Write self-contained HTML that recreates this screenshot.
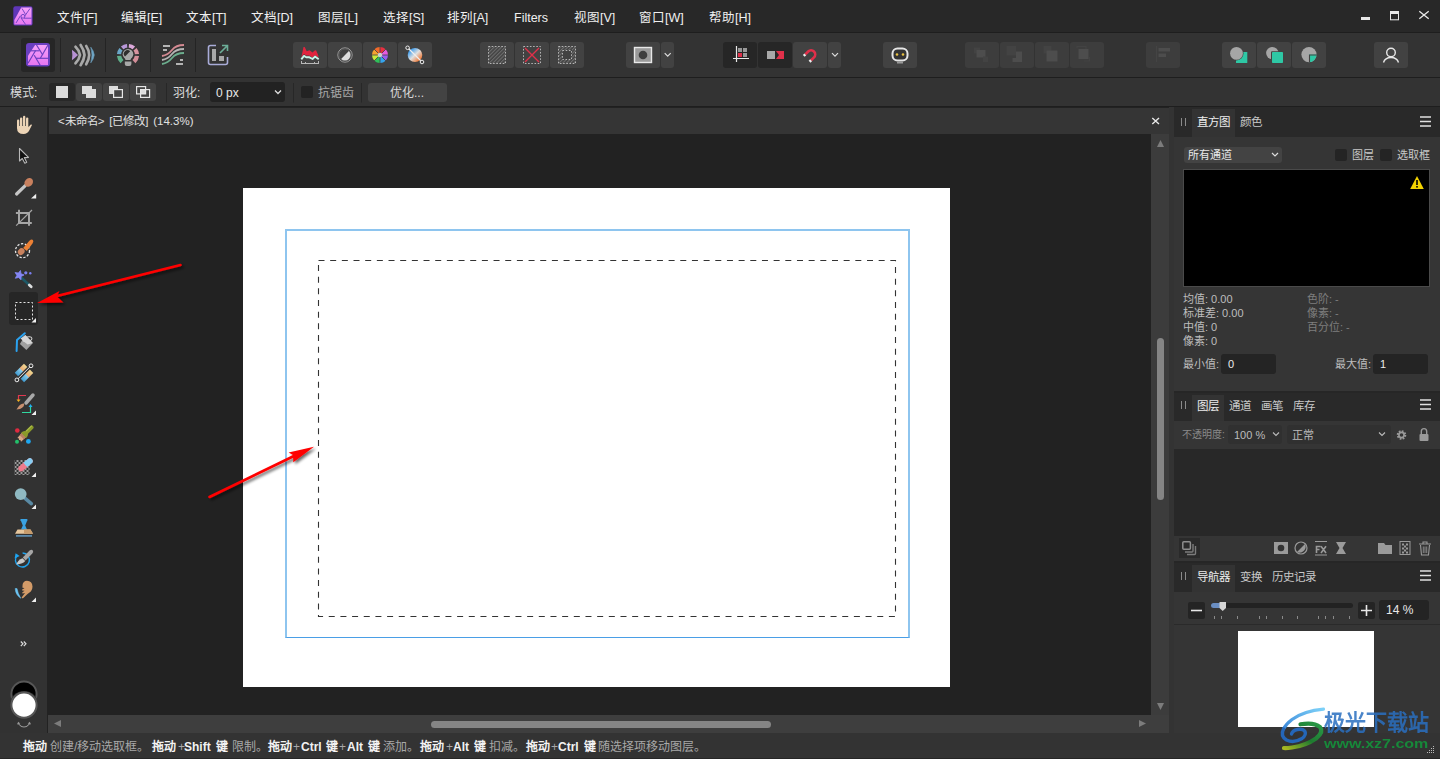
<!DOCTYPE html>
<html lang="zh-CN"><head><meta charset="utf-8">
<style>
*{margin:0;padding:0;box-sizing:border-box}
html,body{width:1440px;height:759px;overflow:hidden;background:#222;font-family:"Liberation Sans",sans-serif;color:#e6e6e6;font-size:12px}
.a{position:absolute}
svg.a{overflow:visible}
#menubar{left:0;top:0;width:1440px;height:32px;background:#282828}
#sep1{left:0;top:32px;width:1440px;height:1px;background:#1e1e1e}
#toolbar{left:0;top:33px;width:1440px;height:44px;background:#333}
#sep2{left:0;top:77px;width:1440px;height:1px;background:#1e1e1e}
#ctx{left:0;top:78px;width:1440px;height:28px;background:#333}
#sep3{left:0;top:106px;width:1440px;height:1px;background:#1e1e1e}
#lefttools{left:0;top:107px;width:47px;height:626px;background:#323232}
#tab{left:49px;top:108px;width:1121px;height:26px;background:#353535}
#canvas{left:49px;top:134px;width:1102px;height:581px;background:#222}
#vscroll{left:1151px;top:134px;width:18px;height:581px;background:#3c3c3c}
#hscroll{left:48px;top:715px;width:1121px;height:18px;background:#3e3e3e}
#status{left:0;top:733px;width:1440px;height:26px;background:#333}
#rpanel{left:1173px;top:107px;width:267px;height:626px;background:#333}
.menu{top:10px;font-size:12.5px;line-height:16px;color:#f0f0f0;white-space:nowrap}
.tb{top:42px;width:34px;height:26px;background:#424242;border-radius:3px}
.tbd{top:42px;width:34px;height:26px;background:#262626;border-radius:3px}
.vsep{width:1px;background:#242424}
.t{white-space:nowrap;line-height:14px}
</style></head><body>
<div id="menubar" class="a"></div>
<div id="sep1" class="a"></div>
<div id="toolbar" class="a"></div>
<div id="sep2" class="a"></div>
<div id="ctx" class="a"></div>
<div id="sep3" class="a"></div>
<div id="lefttools" class="a"></div>
<div id="tab" class="a"></div>
<div id="canvas" class="a"></div>
<div id="vscroll" class="a"></div>
<div id="hscroll" class="a"></div>
<div id="status" class="a"></div>
<div id="rpanel" class="a"></div>
<!-- MENUBAR -->
<div class="a menu" style="left:57px">文件[F]</div>
<div class="a menu" style="left:121px">编辑[E]</div>
<div class="a menu" style="left:186px">文本[T]</div>
<div class="a menu" style="left:251px">文档[D]</div>
<div class="a menu" style="left:318px">图层[L]</div>
<div class="a menu" style="left:383px">选择[S]</div>
<div class="a menu" style="left:447px">排列[A]</div>
<div class="a menu" style="left:514px">Filters</div>
<div class="a menu" style="left:574px">视图[V]</div>
<div class="a menu" style="left:639px">窗口[W]</div>
<div class="a menu" style="left:709px">帮助[H]</div>
<!-- TOOLBAR buttons -->
<div class="a" style="left:21px;top:38px;width:34px;height:34px;background:#262626;border-radius:3px"></div>
<div class="a vsep" style="left:60px;top:38px;height:34px"></div>
<div class="a vsep" style="left:105px;top:38px;height:34px"></div>
<div class="a vsep" style="left:150px;top:38px;height:34px"></div>
<div class="a vsep" style="left:195px;top:38px;height:34px"></div>
<div class="a tb" style="left:293px"></div>
<div class="a tb" style="left:328px"></div>
<div class="a tb" style="left:363px"></div>
<div class="a tb" style="left:398px"></div>
<div class="a tb" style="left:480px"></div>
<div class="a tb" style="left:515px"></div>
<div class="a tb" style="left:550px"></div>
<div class="a tb" style="left:626px"></div>
<div class="a tb" style="left:661px;width:13px"></div>
<div class="a tbd" style="left:723px"></div>
<div class="a tbd" style="left:758px"></div>
<div class="a tb" style="left:793px"></div>
<div class="a tb" style="left:828px;width:13px"></div>
<div class="a tb" style="left:883px"></div>
<div class="a tb" style="left:965px;background:#3d3d3d"></div>
<div class="a tb" style="left:1000px;background:#3d3d3d"></div>
<div class="a tb" style="left:1035px;background:#3d3d3d"></div>
<div class="a tb" style="left:1070px;background:#3d3d3d"></div>
<div class="a tb" style="left:1146px;background:#3d3d3d"></div>
<div class="a tb" style="left:1222px"></div>
<div class="a tb" style="left:1257px"></div>
<div class="a tb" style="left:1292px"></div>
<div class="a tb" style="left:1374px"></div>
<svg class="a" style="left:0;top:0" width="1440" height="110" viewBox="0 0 1440 110">
<defs>
<linearGradient id="pk" x1="0" y1="0" x2="0" y2="1"><stop offset="0" stop-color="#f6a2fa"/><stop offset="1" stop-color="#e676f0"/></linearGradient>
<linearGradient id="gl" x1="0" y1="0" x2="1" y2="1"><stop offset="0.1" stop-color="#1e90f0"/><stop offset="0.5" stop-color="#e0e0e0"/><stop offset="0.9" stop-color="#f26a1c"/></linearGradient>
<pattern id="hatch" width="2.6" height="2.6" patternUnits="userSpaceOnUse" patternTransform="rotate(45)"><rect width="1.1" height="2.6" fill="#6e6e6e"/></pattern>
</defs>
<!-- menubar logo -->
<g transform="translate(13,6)">
 <rect x="0.3" y="0.2" width="19.3" height="19.4" rx="2.2" fill="#5f36b8"/>
 <path d="M8.3 1.5 L18.5 1.5 L18.5 18.5 L1.3 18.5 L1.3 14.1 Z" fill="url(#pk)"/>
 <g stroke="#6a3fc0" stroke-width="0.9" fill="none">
  <path d="M9 2.5 L12.5 8.4"/><path d="M17 2.5 L11.4 10.5"/><path d="M18.6 12.2 L11 12.2"/>
  <path d="M7.4 9.8 L3 17"/><path d="M7.8 11.6 L12.6 18.5"/>
  <circle cx="10" cy="10.3" r="1.9"/>
 </g>
</g>
<!-- photo persona -->
<g transform="translate(26,43)">
 <rect x="0" y="0" width="24" height="23.5" rx="3" fill="#6a3fc0"/>
 <path d="M9.1 1.9 L22 1.9 L22 22 L2 22 L2 12.8 Z" fill="url(#pk)"/>
 <g stroke="#6a3fc0" stroke-width="1.15" fill="none">
  <path d="M5 7.8 L13.6 7.8"/><path d="M10.2 1.5 L16.8 12"/><path d="M22 2 L14.2 15.5"/>
  <path d="M22.3 15.3 L10 15.3"/><path d="M14.2 22.3 L8.2 12.2"/><path d="M2 20.3 L9.6 7.5"/>
 </g>
</g>
<!-- liquify persona -->
<g>
 <path d="M71.9 49.8 Q75 52 78 55 Q75 58 71.9 60.2 Q72.8 55 71.9 49.8 Z" fill="#b792d4"/>
 <g stroke="#a9a9a9" stroke-width="2.7" fill="none" stroke-linecap="round" stroke-linejoin="round">
  <path d="M75.5 46.8 Q79 50 80 55 Q79 60 75.5 63.3"/>
  <path d="M80.6 45 Q84 50 84.5 55 Q84 60 80.6 65.2"/>
  <path d="M86.2 46 Q89 50 89.2 55 Q89 60 86.2 64.3"/>
 </g>
 <path d="M90.8 47.2 Q93.6 50.5 94.3 55 Q93.6 59.5 90.8 62.8 Q93.2 55 90.8 47.2 Z" fill="#6ea4c4" stroke="#6ea4c4" stroke-width="0.6"/>
</g>
<!-- develop persona -->
<g>
<path d="M119.14 54.15 A8.9 8.9 0 0 1 121.13 49.34" stroke="#6aa6c8" stroke-width="4.4" fill="none"/>
<path d="M122.34 48.13 A8.9 8.9 0 0 1 127.15 46.14" stroke="#b897d8" stroke-width="4.4" fill="none"/>
<path d="M128.85 46.14 A8.9 8.9 0 0 1 133.66 48.13" stroke="#dca8da" stroke-width="4.4" fill="none"/>
<path d="M134.87 49.34 A8.9 8.9 0 0 1 136.86 54.15" stroke="#d7939f" stroke-width="4.4" fill="none"/>
<path d="M136.86 55.85 A8.9 8.9 0 0 1 133.96 61.61" stroke="#d28d98" stroke-width="4.4" fill="none"/>
<path d="M122.04 61.61 A8.9 8.9 0 0 1 119.14 55.85" stroke="#5fae8a" stroke-width="4.4" fill="none"/>
 <circle cx="128" cy="54.2" r="6.6" fill="#333"/>
 <circle cx="128" cy="54.2" r="5.3" fill="#a8a8a8"/>
 <path d="M124.8 57.5 L131.2 57.5 L130.5 60 L125.5 60 Z" fill="#a8a8a8"/>
 <path d="M124.8 61.5 L131.4 61.5 L131.4 64 Q131.4 66 129.4 66 L126.8 66 Q124.8 66 124.8 64 Z" fill="#a8a8a8"/>
 <path d="M125 56.6 L130.2 51.3 A3.7 3.7 0 0 0 125 56.6 Z" fill="#2e2e2e"/>
</g>
<!-- tone mapping -->
<g fill="none" stroke-width="1.8">
 <path d="M162 56 Q168 55 172 50 Q176 45 184 45" stroke="#d48a92"/>
 <path d="M162 60 Q168 59 172 54 Q176 49 184 49" stroke="#b4b4b4"/>
 <path d="M162 64 Q168 63 172 58 Q176 53 184 53" stroke="#6cae8e"/>
 <path d="M163 46 L170 46 M163 50 L167 50 M180 60 L183 60 M176 64 L183 64" stroke="#b4b4b4"/>
</g>
<!-- export persona -->
<g>
 <path d="M216 45.5 L210.5 45.5 Q208.5 45.5 208.5 47.5 L208.5 62.5 Q208.5 64.5 210.5 64.5 L225.5 64.5 Q227.5 64.5 227.5 62.5 L227.5 57" stroke="#a9acd8" stroke-width="1.6" fill="none"/>
 <rect x="212" y="49" width="4" height="12" fill="#a8a8a8"/>
 <rect x="219" y="56" width="5" height="5" fill="#a8a8a8"/>
 <path d="M220 53 L227 46 M222 45.5 L227.5 45.5 L227.5 51" stroke="#6cae98" stroke-width="1.6" fill="none"/>
</g>
<!-- histogram -->
<g>
 <path d="M301.5 56.5 L303.5 47 L304.7 47 L306.7 51.2 L309.5 50.3 L312.5 52.5 L315 50.2 L316.2 50.5 L318.3 55.5 L318.5 57.5 L315 55.3 L312.5 57.5 L309 55.5 L306 55.5 L304 54 L301.5 57 Z" fill="#e0253f"/>
 <path d="M301.3 59.3 L304 55.9 L306.2 57.2 L309 57.2 L312.5 59 L315 56.6 L318.7 59.3" stroke="#c8f4e8" stroke-width="1.9" fill="none" stroke-linejoin="round"/>
 <path d="M301 63.5 L319 63.5 M301.5 61 L301.5 63.5 M305.5 62 L305.5 63.5 M314.5 62 L314.5 63.5 M318.5 61 L318.5 63.5" stroke="#b8b8b8" stroke-width="1" fill="none"/>
</g>
<!-- half circle -->
<g>
 <circle cx="345" cy="55" r="7.2" fill="none" stroke="#9a9a9a" stroke-width="1"/>
 <circle cx="345" cy="55" r="6.1" fill="none" stroke="#5a5a5a" stroke-width="1"/>
 <path d="M348.9 51.1 A5.5 5.5 0 0 1 341.1 58.9 Z" fill="#dedede"/>
</g>
<!-- color wheel -->
<g transform="translate(380,55)">
 <path d="M0 0 L0 -8 A8 8 0 0 1 5.66 -5.66 Z" fill="#e83040"/>
 <path d="M0 0 L5.66 -5.66 A8 8 0 0 1 8 0 Z" fill="#e65ae0"/>
 <path d="M0 0 L8 0 A8 8 0 0 1 5.66 5.66 Z" fill="#9a5cf0"/>
 <path d="M0 0 L5.66 5.66 A8 8 0 0 1 0 8 Z" fill="#36a4ec"/>
 <path d="M0 0 L0 8 A8 8 0 0 1 -5.66 5.66 Z" fill="#2fbf5a"/>
 <path d="M0 0 L-5.66 5.66 A8 8 0 0 1 -8 0 Z" fill="#c8e83a"/>
 <path d="M0 0 L-8 0 A8 8 0 0 1 -5.66 -5.66 Z" fill="#f6a230"/>
 <path d="M0 0 L-5.66 -5.66 A8 8 0 0 1 0 -8 Z" fill="#f26a2a"/>
 <g stroke="#424242" stroke-width="0.8"><path d="M0 -8.5 V8.5 M-8.5 0 H8.5 M-6 -6 L6 6 M-6 6 L6 -6"/></g>
 <circle r="2.3" fill="#cfcfcf"/>
</g>
<!-- gradient -->
<g>
 <ellipse cx="415" cy="55" rx="7.3" ry="7" fill="url(#gl)"/>
 <path d="M408 48 L422 62" stroke="#eee" stroke-width="1.2"/>
 <circle cx="407.6" cy="47.8" r="1.8" fill="#424242" stroke="#eee" stroke-width="1"/>
 <circle cx="422" cy="62" r="1.8" fill="#424242" stroke="#eee" stroke-width="1"/>
</g>
<!-- selection buttons -->
<g>
 <rect x="488.5" y="46.5" width="17" height="17" fill="url(#hatch)"/>
 <rect x="488.5" y="46.5" width="17" height="17" fill="none" stroke="#b4b4b4" stroke-width="1" stroke-dasharray="1.6 1.6"/>
 <rect x="523.5" y="46.5" width="17" height="17" fill="none" stroke="#b4b4b4" stroke-width="1" stroke-dasharray="1.6 1.6"/>
 <path d="M525 48 L539 62 M539 48 L525 62" stroke="#e0304a" stroke-width="1.4"/>
 <rect x="558.5" y="46.5" width="17" height="17" fill="url(#hatch)"/>
 <rect x="562" y="50" width="10" height="10" fill="#424242"/>
 <rect x="558.5" y="46.5" width="17" height="17" fill="none" stroke="#b4b4b4" stroke-width="1" stroke-dasharray="1.6 1.6"/>
 <rect x="562.5" y="50.5" width="9" height="9" fill="none" stroke="#b4b4b4" stroke-width="1" stroke-dasharray="1.6 1.6"/>
</g>
<!-- quick mask -->
<g>
 <rect x="634.5" y="47.5" width="17" height="15" fill="#9a9a9a" stroke="#e8e8e8" stroke-width="1.4"/>
 <circle cx="643" cy="55" r="4.3" fill="#3e3e3e"/>
 <path d="M664.7 53.2 L667.7 56.2 L670.7 53.2" stroke="#ddd" stroke-width="1.2" fill="none"/>
</g>
<!-- snapping grid -->
<g>
 <rect x="738" y="48" width="4" height="4" fill="#999"/><rect x="743" y="48" width="4" height="4" fill="#999"/>
 <rect x="738" y="53" width="4" height="4" fill="#e0304a"/><rect x="743" y="53" width="4" height="4" fill="#999"/>
 <path d="M736.5 46 V62 M733 58.5 H749" stroke="#e8e8e8" stroke-width="1.2"/>
</g>
<g>
 <rect x="767" y="51" width="8" height="8" fill="#a8a8a8"/>
 <path d="M776 51 L784 51 L784 59 L776 59 L779 55 Z" fill="#e0304a"/>
</g>
<!-- magnet -->
<g transform="translate(810.5,55) rotate(45) scale(0.82)">
 <path d="M-5 4 L-5 -1 A5 5 0 0 1 5 -1 L5 4" stroke="#e0304a" stroke-width="3.2" fill="none"/>
 <rect x="-6.6" y="4" width="3.2" height="2.6" fill="#eee"/>
 <rect x="3.4" y="4" width="3.2" height="2.6" fill="#eee"/>
</g>
<path d="M832 53.2 L835 56.2 L838 53.2" stroke="#ddd" stroke-width="1.2" fill="none"/>
<!-- assistant -->
<g>
 <rect x="892.5" y="48.5" width="15" height="12" rx="5" fill="#333" stroke="#e6e6e6" stroke-width="2"/>
 <circle cx="897" cy="54.5" r="1.3" fill="#e8c040"/><circle cx="903" cy="54.5" r="1.3" fill="#e8c040"/>
 <rect x="897" y="62" width="6" height="1.5" fill="#999"/>
</g>
<!-- disabled arrange -->
<g>
 <rect x="974" y="47.5" width="6" height="6" fill="#434343"/>
 <rect x="976.5" y="50" width="9" height="7.5" rx="0.5" fill="#4d4d4d"/>
 <rect x="983" y="56.5" width="5" height="5.5" fill="#434343"/>
 <rect x="1006.5" y="46" width="9.5" height="9.5" fill="#434343"/>
 <path d="M1016 51.5 H1022 V62 H1012.5 V58 H1016 Z" fill="#4d4d4d"/>
 <rect x="1043.5" y="46" width="8" height="7.5" fill="#434343"/>
 <rect x="1046.5" y="50.5" width="11" height="11" rx="0.5" fill="#4d4d4d"/>
 <path d="M1077 48 V46.5 H1086 V49" stroke="#434343" stroke-width="1.2" fill="none"/>
 <rect x="1078.5" y="49" width="10" height="10" rx="0.5" fill="#4d4d4d"/>
 <path d="M1089.5 57 V61 H1084" stroke="#434343" stroke-width="1.2" fill="none"/>
 <rect x="1156" y="46" width="1" height="16" fill="#444"/>
 <rect x="1158.5" y="48" width="11.5" height="3.5" fill="#4d4d4d"/><rect x="1158.5" y="53.5" width="7.5" height="3.5" fill="#4d4d4d"/>
</g>
<!-- booleans -->
<g>
 <rect x="1236" y="52" width="11.3" height="11" rx="0.5" fill="#2ec8a5"/>
 <circle cx="1236.5" cy="53.4" r="7" fill="#424242"/>
 <circle cx="1236.5" cy="53.4" r="6.4" fill="#a6a6a6"/>
 <circle cx="1272.3" cy="53.1" r="6.2" fill="#a6a6a6"/>
 <rect x="1271" y="51.2" width="12.7" height="12.5" rx="1" fill="#424242"/>
 <rect x="1272" y="52" width="11" height="11" rx="0.8" fill="#2ec8a5"/>
 <circle cx="1309" cy="54.6" r="7.6" fill="#a6a6a6"/>
 <path d="M1309 54.6 L1316.6 54.6 A7.6 7.6 0 0 1 1309 62.2 Z" fill="#2ec8a5"/>
 <path d="M1309.5 62.5 L1309.5 55 L1317 55" stroke="#424242" stroke-width="1.1" fill="none"/>
</g>
<!-- user -->
<g fill="none" stroke="#e6e6e6" stroke-width="1.4">
 <circle cx="1391" cy="52.5" r="4.3"/>
 <path d="M1383.5 62.5 Q1385 57.5 1391 57.5 Q1397 57.5 1398.5 62.5"/>
</g>
<!-- window controls -->
<rect x="1361" y="17" width="9" height="3" fill="#e8e8e8"/>
<rect x="1390.5" y="11.5" width="8" height="8.3" fill="none" stroke="#e8e8e8" stroke-width="1"/>
<rect x="1390" y="11" width="9" height="3" fill="#e8e8e8"/>
<path d="M1419.3 11.2 L1428.7 18.8 M1428.7 11.2 L1419.3 18.8" stroke="#e8e8e8" stroke-width="1.3"/>
</svg>
<!-- CONTEXT BAR -->
<div class="a t" style="left:10px;top:86px;font-size:12px;color:#dcdcdc">模式:</div>
<div class="a" style="left:49px;top:83px;width:26px;height:18px;background:#282828;border-radius:3px"></div>
<div class="a" style="left:76px;top:83px;width:26px;height:18px;background:#434343;border-radius:3px"></div>
<div class="a" style="left:103px;top:83px;width:26px;height:18px;background:#434343;border-radius:3px"></div>
<div class="a" style="left:130px;top:83px;width:26px;height:18px;background:#434343;border-radius:3px"></div>
<svg class="a" style="left:0;top:78px" width="470" height="28" viewBox="0 78 470 28">
 <rect x="56" y="86" width="12" height="12" fill="#dcdcdc"/>
 <rect x="82" y="86" width="10" height="8" fill="#dcdcdc"/><rect x="86" y="89" width="10" height="9" fill="#dcdcdc"/>
 <rect x="109" y="86" width="9" height="8" fill="#dcdcdc"/><rect x="113" y="89" width="10" height="9" fill="#434343"/>
 <rect x="113.6" y="89.6" width="8.8" height="7.8" fill="none" stroke="#e6e6e6" stroke-width="1.2"/>
 <rect x="140" y="89" width="6" height="5" fill="#dcdcdc"/>
 <rect x="136.6" y="86.6" width="9" height="7.3" fill="none" stroke="#e6e6e6" stroke-width="1.2"/>
 <rect x="140.6" y="89.6" width="9" height="7.8" fill="none" stroke="#e6e6e6" stroke-width="1.2"/>
 <path d="M166.5 83 V102.5 M293.5 83 V102.5 M361.5 83 V102.5" stroke="#272727" stroke-width="1"/>
</svg>
<div class="a t" style="left:173px;top:86px;font-size:12px;color:#dcdcdc">羽化:</div>
<div class="a" style="left:210px;top:82px;width:75px;height:20px;background:#222;border-radius:3px"></div>
<div class="a t" style="left:216px;top:86px;font-size:12px;color:#e8e8e8">0 px</div>
<div class="a" style="left:301px;top:86px;width:12px;height:12px;background:#232323;border-radius:2px"></div>
<div class="a t" style="left:318px;top:86px;font-size:12px;color:#a8a8a8">抗锯齿</div>
<div class="a" style="left:368px;top:83px;width:79px;height:19px;background:#434343;border-radius:3px"></div>
<div class="a t" style="left:390px;top:86px;font-size:12px;color:#d8d8d8">优化...</div>
<svg class="a" style="left:0;top:0" width="300" height="110"><path d="M275 90.5 L278 93.5 L281 90.5" stroke="#ddd" stroke-width="1.3" fill="none"/></svg>
<!-- LEFT TOOLS -->
<div class="a" style="left:9px;top:292px;width:29px;height:33px;background:#262626;border-radius:3px"></div>
<svg class="a" style="left:0;top:0" width="48" height="759" viewBox="0 0 48 759">
<defs>
 <pattern id="chk" x="0.5" y="0" width="4" height="4" patternUnits="userSpaceOnUse"><rect width="2" height="2" fill="#9a9a9a"/><rect x="2" y="2" width="2" height="2" fill="#9a9a9a"/></pattern>
</defs>
<!-- hand -->
<g fill="#ecd4b6">
 <rect x="17" y="119.6" width="2.3" height="9" rx="1.15"/>
 <rect x="20" y="117.4" width="2.3" height="10" rx="1.15"/>
 <rect x="23" y="115.7" width="2.3" height="11" rx="1.15"/>
 <rect x="26" y="117.4" width="2.3" height="10" rx="1.15"/>
 <path d="M17 126 L28.3 126 L28.3 127.2 L30.8 124.6 Q31.8 124 32 125 L29.2 130.6 Q27.5 134 23.6 134 Q17 134 17 128 Z"/>
</g>
<!-- arrow -->
<path d="M19.5 148.5 L19.5 161 L22.3 158.5 L24.8 163.3 L26.7 162.3 L24.3 157.6 L28.5 157.4 Z" fill="#111" stroke="#b8b8b8" stroke-width="1.1" stroke-linejoin="round"/>
<!-- color picker -->
<path d="M16.6 194 L25 185.8" stroke="#c6c6c6" stroke-width="3.2" stroke-linecap="round"/>
<ellipse cx="28.7" cy="182.4" rx="4.7" ry="3.9" fill="#c8805e" transform="rotate(-45 28.7 182.4)"/>
<path d="M36.2 193.8 L36.2 198.6 L31 198.6 Z" fill="#f0f0f0"/>
<!-- crop -->
<g stroke="#a6a6a6" fill="none">
 <path d="M19 209.8 V223 H31.8" stroke-width="2"/><path d="M15.9 213 H29 V225.8" stroke-width="2"/><path d="M16.2 225.6 L32 210" stroke-width="1.2"/>
</g>
<!-- selection brush -->
<circle cx="22.5" cy="250.7" r="7" fill="none" stroke="#e6e6e6" stroke-width="1.3" stroke-dasharray="2.3 1.6"/>
<path d="M23.2 248 L29.4 240.8 Q31.6 238.8 32.9 240 Q34 241.4 32.5 243.6 L26.8 251 Z" fill="#ec8034"/>
<ellipse cx="21.2" cy="251.6" rx="3.6" ry="3.1" fill="#c9825e" transform="rotate(-45 21.2 251.6)"/>
<!-- magic wand -->
<path d="M22 278.3 L30.3 286" stroke="#1d5866" stroke-width="2.6" stroke-linecap="round"/>
<path d="M29.3 285 L31.2 286.8" stroke="#dedede" stroke-width="2.8" stroke-linecap="round"/>
<path d="M20.47 270.47 L20.99 273.75 L24.09 274.94 L21.13 276.45 L20.96 279.77 L18.60 277.42 L15.39 278.28 L16.90 275.32 L15.09 272.53 L18.38 273.05 Z" fill="#8486f4" stroke="#8486f4" stroke-width="0.8" stroke-linejoin="round"/>
<circle cx="25.8" cy="272.8" r="1.6" fill="#7b7ff0"/><circle cx="30.3" cy="273.2" r="1.2" fill="#7b7ff0"/>
<!-- marquee -->
<rect x="15.5" y="302.5" width="17" height="17" fill="none" stroke="#e6e6e6" stroke-width="1" stroke-dasharray="2 2"/>
<path d="M36 318 L36 322.5 L31.5 322.5 Z" fill="#f0f0f0"/>
<!-- flood fill -->
<path d="M25.3 334.9 L32.9 342.9 L26.4 350.1 L19.9 344 Z" fill="#a0a0a0"/>
<path d="M25.3 334.9 L32.9 342.9 L27.5 344.5 L20.5 338.5 Z" fill="#d6d6d6"/>
<ellipse cx="27.4" cy="339.2" rx="4.6" ry="2.2" fill="none" stroke="#d8d8d8" stroke-width="1" transform="rotate(-15 27.4 339.2)"/>
<path d="M24.8 333.2 L17 340 L16.6 351" stroke="#2aa2f0" stroke-width="2" fill="none" stroke-linecap="round" stroke-linejoin="round"/>
<!-- gradient tool -->
<defs>
 <linearGradient id="gtb" x1="0" y1="0" x2="1" y2="0"><stop offset="0" stop-color="#3e9ad0"/><stop offset="0.5" stop-color="#8ccbe8"/><stop offset="0.5" stop-color="#e8a878"/><stop offset="1" stop-color="#f0d890"/></linearGradient>
</defs>
<g transform="translate(24 372.9) rotate(-45)">
 <rect x="-6.5" y="-6.6" width="13" height="4.8" fill="url(#gtb)"/>
 <rect x="-6.5" y="1.8" width="13" height="4.8" fill="url(#gtb)"/>
</g>
<path d="M17 379.8 L31 365.8" stroke="#eee" stroke-width="1"/>
<circle cx="16.9" cy="379.9" r="1.9" fill="#333" stroke="#eee" stroke-width="1"/>
<circle cx="31" cy="365.8" r="1.9" fill="#333" stroke="#eee" stroke-width="1"/>
<!-- recolor brush -->
<path d="M26 403 L33 395" stroke="#a8a8a8" stroke-width="3.5" stroke-linecap="round"/>
<path d="M16.5 409.5 Q20 403 24 403.5 Q25 406.5 20 409 Z" fill="#c89070"/>
<path d="M26 395.5 L18.5 395.5 L18.5 401" stroke="#e03850" stroke-width="1.2" fill="none"/>
<path d="M16.5 399.5 L18.5 402 L20.5 399.5 Z" fill="#f0b020"/>
<path d="M22 412.5 L30.5 412.5 L30.5 406.5" stroke="#30d8a0" stroke-width="1.2" fill="none"/>
<path d="M28.5 407 L30.5 404 L32.5 407 Z" fill="#20b0f0"/>
<path d="M36 410.5 L36 415 L31.5 415 Z" fill="#f0f0f0"/>
<!-- paint mixer -->
<g transform="translate(24.5 434.5) rotate(-45)">
 <path d="M-7.5 -2.6 L-1 -3 L-1 3 L-7.5 2.6 L-6.8 1 L-7.8 0 L-6.8 -1 Z" fill="#d8a888"/>
 <path d="M-4 -2.8 L-1 -3 L-1 3 L-4 2.8 Z" fill="#b88060"/>
 <path d="M-1.2 -3.6 Q1.5 -3.8 3 -2 L10.5 -1.9 Q12 -1.9 12 0 Q12 1.9 10.5 1.9 L3 2 Q1.5 3.8 -1.2 3.6 Z" fill="#8a9a2a"/>
 <path d="M3.5 -1.6 L10.5 -1.6 Q11.5 -1.6 11.5 -0.6 L3.5 -0.6 Z" fill="#b0c050"/>
</g>
<circle cx="17.3" cy="430.5" r="2.3" fill="#e02a40"/><circle cx="17" cy="441.8" r="2" fill="#22c06a"/><circle cx="28.4" cy="441.4" r="2.4" fill="#1ea8f2"/>
<!-- eraser -->
<rect x="14.5" y="460" width="15" height="15" fill="url(#chk)"/>
<g transform="rotate(-40 25.3 464.8)"><rect x="17" y="462" width="17" height="5.8" rx="2.9" fill="#ee7a8c"/><rect x="25.3" y="462" width="8.7" height="5.8" rx="2.9" fill="#86cef2"/><rect x="25.3" y="462" width="3" height="5.8" fill="#86cef2"/></g>
<path d="M36 472.5 L36 477 L31.5 477 Z" fill="#f0f0f0"/>
<!-- dodge -->
<path d="M24.5 497.8 L31.3 503.6" stroke="#5a8aa4" stroke-width="3.6" stroke-linecap="round"/>
<circle cx="20.7" cy="494.1" r="5.9" fill="#8fb9c2"/>
<path d="M36 504.5 L36 509 L31.5 509 Z" fill="#f0f0f0"/>
<!-- clone stamp -->
<rect x="20.3" y="519" width="7.2" height="2" rx="0.8" fill="#3aa2e2"/>
<path d="M21 521 L27 521 L25.2 525.5 L27 529.6 L21 529.6 L22.8 525.5 Z" fill="#3aa2e2"/>
<path d="M17.5 529.6 L30.5 529.6 L33 533.8 L15 533.8 Z" fill="#e6c69c"/>
<path d="M24 529.6 L30.5 529.6 L33 533.8 L24 533.8 Z" fill="#c89c6c"/>
<rect x="16" y="535" width="16" height="1.8" fill="#5a88aa"/>
<!-- healing -->
<path d="M17.5 555 A7 7 0 1 0 22.6 553" stroke="#1ea4f0" stroke-width="1.4" fill="none"/>
<path d="M14.6 558.5 L15.6 553.3 L19.6 556 Z" fill="#1ea4f0"/>
<path d="M22.8 557.6 L29.6 550.6 Q31.5 549 32.8 550.4 Q33.8 551.8 32.3 553.5 L25.6 560.6 Z" fill="#a6a6a6"/>
<path d="M16.3 564.4 Q17.8 560 22.5 558.2 L25.2 561 Q23.5 564 16.3 564.4 Z" fill="#c8c8c8"/>
<!-- smudge -->
<path d="M15.2 588.5 Q15.5 595 20.8 598.3 Q17.8 593.5 17 588.5 Z" fill="#6cc4f2" stroke="#6cc4f2" stroke-width="0.5"/>
<path d="M27 580.8 Q32.2 581 32.5 586.5 Q32.4 590.5 29.5 592.5 L27.5 594 L23.3 598 Q22 598.8 21.6 597.6 L25 593 L22.7 593.6 Q21.8 593.2 22.5 592.3 L24.6 590.8 L22.3 590.6 Q21.6 590 22.5 589.3 L24.5 588.3 L22.4 587.6 Q21.8 587 22.6 586.4 L22.5 585 Q23 581 27 580.8 Z" fill="#d39b68"/>
<path d="M36 597.5 L36 602 L31.5 602 Z" fill="#f0f0f0"/>
<!-- more -->
<path d="M20.8 641.5 L23 643.8 L20.8 646 M23.8 641.5 L26 643.8 L23.8 646" stroke="#ddd" stroke-width="1.1" fill="none"/>
<!-- colors -->
<circle cx="24" cy="694" r="12.6" fill="#000" stroke="#575757" stroke-width="2"/>
<circle cx="24" cy="705.1" r="14.2" fill="#323232"/>
<circle cx="24" cy="705.1" r="12.6" fill="#fff" stroke="#575757" stroke-width="2"/>
<path d="M18 723.5 Q24 730.5 30 723.5" stroke="#999" stroke-width="1.1" fill="none"/>
<path d="M17 724.5 L18.2 721.8 L20.3 723.6 Z M31 724.5 L29.8 721.8 L27.7 723.6 Z" fill="#999"/>
</svg>
<!-- TAB -->
<div class="a t" style="left:58px;top:114px;font-size:11.5px;word-spacing:1.5px;color:#e0e0e0">&lt;未命名&gt; [已修改] (14.3%)</div>
<!-- DOC -->
<div class="a" style="left:243px;top:188px;width:707px;height:499px;background:#fff"></div>
<div class="a" style="left:285px;top:229px;width:625px;height:409px;border:2px solid #8ec5ef;border-bottom:1px solid #4a9ee6"></div>
<svg class="a" style="left:0;top:0" width="1440" height="759" viewBox="0 0 1440 759">
 <rect x="318.5" y="260.5" width="577" height="356" fill="none" stroke="#333" stroke-width="1.1" stroke-dasharray="6 5.67"/>
 <!-- close -->
 <path d="M1152.3 118 L1159 124 M1159 118 L1152.3 124" stroke="#e8e8e8" stroke-width="1.4"/>
 <!-- vscroll arrows -->
 <path d="M1157 147 L1160.5 140 L1164 147 Z" fill="#7c7c7c"/>
 <path d="M1157 703 L1160.5 710 L1164 703 Z" fill="#7c7c7c"/>
 <rect x="1157" y="338" width="7" height="162" rx="3.5" fill="#858585"/>
 <!-- hscroll arrows -->
 <path d="M61 720 L54 723.5 L61 727 Z" fill="#7c7c7c"/>
 <path d="M1139 720 L1146 723.5 L1139 727 Z" fill="#7c7c7c"/>
 <rect x="431" y="721" width="340" height="7" rx="3.5" fill="#858585"/>
</svg>
<!-- RIGHT PANEL -->
<div class="a" style="left:1169px;top:107px;width:5px;height:626px;background:#333"></div>
<!-- histogram panel -->
<div class="a" style="left:1174px;top:107px;width:266px;height:30px;background:#292929"></div>
<div class="a" style="left:1192px;top:109px;width:43px;height:28px;background:#333"></div>
<div class="a" style="left:1174px;top:137px;width:266px;height:254px;background:#353535"></div>
<div class="a t" style="left:1197px;top:115px;font-size:11.5px;color:#ececec">直方图</div>
<div class="a t" style="left:1240px;top:115px;font-size:11.5px;color:#c8c8c8">颜色</div>
<div class="a" style="left:1184px;top:147px;width:98px;height:16px;background:#434343;border-radius:3px"></div>
<div class="a t" style="left:1188px;top:148px;font-size:11px;color:#e8e8e8">所有通道</div>
<div class="a" style="left:1335px;top:149px;width:12px;height:12px;background:#242424;border-radius:2px"></div>
<div class="a t" style="left:1352px;top:148px;font-size:11px;color:#c8c8c8">图层</div>
<div class="a" style="left:1380px;top:149px;width:12px;height:12px;background:#242424;border-radius:2px"></div>
<div class="a t" style="left:1397px;top:148px;font-size:11px;color:#c8c8c8">选取框</div>
<div class="a" style="left:1183px;top:169px;width:247px;height:118px;background:#000;border:1px solid #4a4a4a"></div>
<div class="a t" style="left:1183px;top:292px;font-size:11px;color:#bdbdbd">均值: 0.00</div>
<div class="a t" style="left:1183px;top:306px;font-size:11px;color:#bdbdbd">标准差: 0.00</div>
<div class="a t" style="left:1183px;top:320px;font-size:11px;color:#bdbdbd">中值: 0</div>
<div class="a t" style="left:1183px;top:334px;font-size:11px;color:#bdbdbd">像素: 0</div>
<div class="a t" style="left:1307px;top:292px;font-size:11px;color:#7e7e7e">色阶: -</div>
<div class="a t" style="left:1307px;top:306px;font-size:11px;color:#7e7e7e">像素: -</div>
<div class="a t" style="left:1307px;top:320px;font-size:11px;color:#7e7e7e">百分位: -</div>
<div class="a t" style="left:1183px;top:357px;font-size:11px;color:#bdbdbd">最小值:</div>
<div class="a" style="left:1221px;top:354px;width:55px;height:20px;background:#242424;border-radius:3px"></div>
<div class="a t" style="left:1228px;top:357px;font-size:11px;color:#ececec">0</div>
<div class="a t" style="left:1335px;top:357px;font-size:11px;color:#bdbdbd">最大值:</div>
<div class="a" style="left:1373px;top:354px;width:55px;height:20px;background:#242424;border-radius:3px"></div>
<div class="a t" style="left:1380px;top:357px;font-size:11px;color:#ececec">1</div>
<div class="a" style="left:1174px;top:391px;width:266px;height:2px;background:#262626"></div>
<!-- layers panel -->
<div class="a" style="left:1174px;top:393px;width:266px;height:28px;background:#292929"></div>
<div class="a" style="left:1192px;top:395px;width:32px;height:26px;background:#333"></div>
<div class="a t" style="left:1197px;top:399px;font-size:11.5px;color:#ececec">图层</div>
<div class="a t" style="left:1229px;top:399px;font-size:11.5px;color:#c8c8c8">通道</div>
<div class="a t" style="left:1261px;top:399px;font-size:11.5px;color:#c8c8c8">画笔</div>
<div class="a t" style="left:1293px;top:399px;font-size:11.5px;color:#c8c8c8">库存</div>
<div class="a" style="left:1174px;top:421px;width:266px;height:28px;background:#353535"></div>
<div class="a t" style="left:1182px;top:428px;font-size:10px;color:#8a8a8a">不透明度:</div>
<div class="a" style="left:1228px;top:425px;width:54px;height:19px;background:#303030;border-radius:3px"></div>
<div class="a t" style="left:1234px;top:428px;font-size:11px;color:#bcbcbc">100 %</div>
<div class="a" style="left:1287px;top:425px;width:104px;height:19px;background:#303030;border-radius:3px"></div>
<div class="a t" style="left:1292px;top:428px;font-size:11px;color:#bcbcbc">正常</div>
<div class="a" style="left:1174px;top:449px;width:266px;height:87px;background:#282828"></div>
<div class="a" style="left:1174px;top:536px;width:266px;height:25px;background:#353535"></div>
<div class="a" style="left:1179px;top:538px;width:21px;height:20px;background:#2a2a2a"></div>
<div class="a" style="left:1174px;top:561px;width:266px;height:2px;background:#262626"></div>
<!-- navigator panel -->
<div class="a" style="left:1174px;top:563px;width:266px;height:29px;background:#292929"></div>
<div class="a" style="left:1192px;top:565px;width:43px;height:27px;background:#333"></div>
<div class="a t" style="left:1197px;top:570px;font-size:11.5px;color:#ececec">导航器</div>
<div class="a t" style="left:1240px;top:570px;font-size:11.5px;color:#c8c8c8">变换</div>
<div class="a t" style="left:1272px;top:570px;font-size:11.5px;color:#c8c8c8">历史记录</div>
<div class="a" style="left:1174px;top:592px;width:266px;height:141px;background:#353535"></div>
<div class="a" style="left:1174px;top:624px;width:266px;height:1px;background:#2a2a2a"></div>
<div class="a" style="left:1188px;top:602px;width:17px;height:17px;background:#242424;border-radius:2px"></div>
<div class="a" style="left:1358px;top:602px;width:17px;height:17px;background:#242424;border-radius:2px"></div>
<div class="a" style="left:1379px;top:600px;width:50px;height:20px;background:#242424;border-radius:3px"></div>
<div class="a t" style="left:1386px;top:603px;font-size:12px;color:#e8e8e8">14 %</div>
<div class="a" style="left:1238px;top:631px;width:136px;height:96px;background:#fff"></div>
<svg class="a" style="left:0;top:0" width="1440" height="759" viewBox="0 0 1440 759">
 <!-- grips & hamburgers -->
 <path d="M1181.5 118 V126 M1185.5 118 V126 M1181.5 401 V409 M1185.5 401 V409 M1181.5 572 V580 M1185.5 572 V580" stroke="#8a8a8a" stroke-width="1"/>
 <path d="M1420 117 H1431 M1420 121.5 H1431 M1420 126 H1431" stroke="#e0e0e0" stroke-width="1.6"/>
 <path d="M1420 400 H1431 M1420 404.5 H1431 M1420 409 H1431" stroke="#e0e0e0" stroke-width="1.6"/>
 <path d="M1420 571 H1431 M1420 575.5 H1431 M1420 580 H1431" stroke="#e0e0e0" stroke-width="1.6"/>
 <!-- dropdown chevrons -->
 <path d="M1272 153 L1275 156 L1278 153" stroke="#ddd" stroke-width="1.2" fill="none"/>
 <path d="M1273 432.5 L1276 435.5 L1279 432.5" stroke="#bbb" stroke-width="1.1" fill="none"/>
 <path d="M1379 432.5 L1382 435.5 L1385 432.5" stroke="#bbb" stroke-width="1.1" fill="none"/>
 <!-- warning -->
 <path d="M1417 176 L1423.8 189 L1410.2 189 Z" fill="#f2d200"/>
 <path d="M1417 180 V185" stroke="#000" stroke-width="1.6"/><rect x="1416.2" y="186" width="1.6" height="1.6" fill="#000"/>
 <!-- gear & lock -->
 <circle cx="1401.5" cy="435" r="3.6" fill="none" stroke="#9a9a9a" stroke-width="2.4" stroke-dasharray="1.6 1.2"/>
 <circle cx="1401.5" cy="435" r="2.6" fill="none" stroke="#9a9a9a" stroke-width="1.6"/>
 <rect x="1419.5" y="434" width="9" height="7" rx="1" fill="#9a9a9a"/>
 <path d="M1421.3 434 V431.5 Q1421.3 428.6 1424 428.6 Q1426.7 428.6 1426.7 431.5 V434" stroke="#9a9a9a" stroke-width="1.4" fill="none"/>
 <!-- layers bottom icons -->
 <rect x="1182.8" y="541.8" width="7.6" height="7.4" rx="1" fill="none" stroke="#8e8e8e" stroke-width="1.5"/>
 <path d="M1193 544 V551 Q1193 552 1192 552 H1185 M1195.5 546 V553.5 Q1195.5 554.5 1194.5 554.5 H1187" stroke="#7c7c7c" stroke-width="1.4" fill="none"/>
 <rect x="1274" y="542" width="14" height="12" fill="#9a9a9a"/><circle cx="1281" cy="548" r="3.3" fill="#333"/>
 <circle cx="1301" cy="548" r="6" fill="none" stroke="#9a9a9a" stroke-width="1.2"/><path d="M1305 544 A6 6 0 0 1 1297 552 Z" fill="#9a9a9a"/>
 <path d="M1315 541.5 H1327 M1315 555 H1327" stroke="#9a9a9a" stroke-width="1"/>
 <path d="M1316.5 553 V546.5 H1320.5 M1316.5 549.5 H1319.5 M1321 546.2 L1326 553 M1326 546.2 L1321 553" stroke="#9a9a9a" stroke-width="1.6" fill="none"/>
 <path d="M1336 542 H1346 L1342.5 548 L1346 554 H1336 L1339.5 548 Z" fill="#9a9a9a"/>
 <path d="M1378 543 H1384 L1385.5 545 H1392 V554 H1378 Z" fill="#9a9a9a"/>
 <rect x="1400" y="541.5" width="10" height="13" fill="none" stroke="#9a9a9a" stroke-width="1"/>
 <path d="M1402 543.5 h2 v2 h-2z M1406 543.5 h2 v2 h-2z M1404 545.5 h2 v2 h-2z M1402 547.5 h2 v2 h-2z M1406 547.5 h2 v2 h-2z M1404 549.5 h2 v2 h-2z M1402 551.5 h2 v2 h-2z M1406 551.5 h2 v2 h-2z" fill="#9a9a9a"/>
 <path d="M1419 544 H1431 M1423 544 V542 H1427 V544 M1420.5 545 L1421.5 555 H1428.5 L1429.5 545" stroke="#9a9a9a" stroke-width="1.1" fill="none"/>
 <path d="M1423.3 546.5 V553 M1425 546.5 V553 M1426.7 546.5 V553" stroke="#9a9a9a" stroke-width="0.8"/>
 <!-- navigator zoom -->
 <path d="M1191 610.5 H1202" stroke="#e8e8e8" stroke-width="1.6"/>
 <path d="M1361 610.5 H1372 M1366.5 605 V616" stroke="#e8e8e8" stroke-width="1.6"/>
 <rect x="1211" y="603" width="142" height="5" rx="2.5" fill="#222"/>
 <rect x="1211" y="603" width="11" height="5" rx="2.5" fill="#6a8ec2"/>
 <path d="M1219.5 602 H1226 V608 L1222.7 611 L1219.5 608 Z" fill="#d6d6d6"/>
 <g stroke="#8a8a8a" stroke-width="1"><path d="M1214.5 616 V619 M1221.5 616 V619 M1237.5 616 V619 M1259.5 616 V619 M1266.5 616 V619 M1282.5 616 V619 M1297.5 616 V619 M1318.5 616 V619 M1325.5 616 V619 M1333.5 616 V619 M1349.5 616 V619"/></g>
</svg>
<!-- STATUS -->
<div class="a t" style="left:23px;top:739px;font-size:12px;line-height:16px;font-weight:bold;color:#f2f2f2">拖动</div>
<div class="a t" style="left:50px;top:739px;font-size:12px;line-height:16px;color:#a8a8a8">创建/移动选取框。</div>
<div class="a t" style="left:152px;top:739px;font-size:12px;line-height:16px;font-weight:bold;color:#f2f2f2">拖动</div>
<div class="a t" style="left:178px;top:739px;font-size:12px;line-height:16px;color:#a8a8a8">+</div>
<div class="a t" style="left:184px;top:739px;font-size:12px;line-height:16px;font-weight:bold;color:#f2f2f2">Shift</div>
<div class="a t" style="left:216px;top:739px;font-size:12px;line-height:16px;font-weight:bold;color:#f2f2f2">键</div>
<div class="a t" style="left:232px;top:739px;font-size:12px;line-height:16px;color:#a8a8a8">限制。</div>
<div class="a t" style="left:268px;top:739px;font-size:12px;line-height:16px;font-weight:bold;color:#f2f2f2">拖动</div>
<div class="a t" style="left:293px;top:739px;font-size:12px;line-height:16px;color:#a8a8a8">+</div>
<div class="a t" style="left:301px;top:739px;font-size:12px;line-height:16px;font-weight:bold;color:#f2f2f2">Ctrl</div>
<div class="a t" style="left:326px;top:739px;font-size:12px;line-height:16px;font-weight:bold;color:#f2f2f2">键</div>
<div class="a t" style="left:339px;top:739px;font-size:12px;line-height:16px;color:#a8a8a8">+</div>
<div class="a t" style="left:347px;top:739px;font-size:12px;line-height:16px;font-weight:bold;color:#f2f2f2">Alt</div>
<div class="a t" style="left:368px;top:739px;font-size:12px;line-height:16px;font-weight:bold;color:#f2f2f2">键</div>
<div class="a t" style="left:383px;top:739px;font-size:12px;line-height:16px;color:#a8a8a8">添加。</div>
<div class="a t" style="left:420px;top:739px;font-size:12px;line-height:16px;font-weight:bold;color:#f2f2f2">拖动</div>
<div class="a t" style="left:446px;top:739px;font-size:12px;line-height:16px;color:#a8a8a8">+</div>
<div class="a t" style="left:453px;top:739px;font-size:12px;line-height:16px;font-weight:bold;color:#f2f2f2">Alt</div>
<div class="a t" style="left:474px;top:739px;font-size:12px;line-height:16px;font-weight:bold;color:#f2f2f2">键</div>
<div class="a t" style="left:489px;top:739px;font-size:12px;line-height:16px;color:#a8a8a8">扣减。</div>
<div class="a t" style="left:526px;top:739px;font-size:12px;line-height:16px;font-weight:bold;color:#f2f2f2">拖动</div>
<div class="a t" style="left:551px;top:739px;font-size:12px;line-height:16px;color:#a8a8a8">+</div>
<div class="a t" style="left:558px;top:739px;font-size:12px;line-height:16px;font-weight:bold;color:#f2f2f2">Ctrl</div>
<div class="a t" style="left:584px;top:739px;font-size:12px;line-height:16px;font-weight:bold;color:#f2f2f2">键</div>
<div class="a t" style="left:598px;top:739px;font-size:12px;line-height:16px;color:#a8a8a8">随选择项移动图层。</div>
<div class="a" style="left:0;top:758px;width:1440px;height:1px;background:#262626"></div>
<!-- ARROWS -->
<svg class="a" style="left:0;top:0" width="1440" height="759" viewBox="0 0 1440 759">
 <defs>
  <filter id="sh" x="-20%" y="-50%" width="140%" height="200%"><feGaussianBlur in="SourceAlpha" stdDeviation="1.5"/><feOffset dx="2" dy="2" result="b"/><feComponentTransfer><feFuncA type="linear" slope="0.6"/></feComponentTransfer><feMerge><feMergeNode/><feMergeNode in="SourceGraphic"/></feMerge></filter>
 </defs>
 <g filter="url(#sh)">
  <path d="M180.5 265 L55 296.5" stroke="#f00" stroke-width="2.6" stroke-linecap="round"/>
  <path d="M37 303 L59.5 291 L57 296.5 L63.5 302.5 Z" fill="#f00"/>
 </g>
 <g filter="url(#sh)">
  <path d="M209.5 497 L296 455" stroke="#f00" stroke-width="2.6" stroke-linecap="round"/>
  <path d="M314 446.7 L288.6 452.4 L293 455 L293.3 462.2 Z" fill="#f00"/>
 </g>
</svg>
<!-- WATERMARK -->
<div class="a t" style="left:1324px;top:709px;font-size:21px;line-height:26px;font-weight:bold;color:#2a6fc0;opacity:0.85;transform:scaleY(1.04);transform-origin:0 0">极光下载站</div>
<div class="a t" style="left:1324px;top:736px;font-size:13px;line-height:16px;font-weight:bold;color:#17893a;transform:scaleX(1.23);transform-origin:0 0">www.xz7.com</div>
<svg class="a" style="left:0;top:0" width="1440" height="759" viewBox="0 0 1440 759">
 <defs>
  <linearGradient id="wb" x1="0" y1="0" x2="1" y2="0"><stop offset="0" stop-color="#1f5fae"/><stop offset="1" stop-color="#6cc8f4"/></linearGradient>
  <linearGradient id="wg" x1="1" y1="0" x2="0" y2="1"><stop offset="0" stop-color="#2a9a48"/><stop offset="0.5" stop-color="#1e7a30"/><stop offset="1" stop-color="#a8b820"/></linearGradient>
  <linearGradient id="wb2" x1="1" y1="0" x2="0" y2="1"><stop offset="0" stop-color="#7cd0f8"/><stop offset="1" stop-color="#3a86d8"/></linearGradient>
 </defs>
 <path d="M1323.5 709.2 Q1304 711 1292 719.5 Q1286 724 1283.5 729" stroke="url(#wb2)" stroke-width="3.2" fill="none" stroke-linecap="round"/>
 <path d="M1283.5 729 Q1280 736 1286.5 740 Q1294 743.5 1302 738.5 Q1306.5 735 1305 731.5 Q1303 728.5 1297.5 729.5 Q1292.5 730.5 1291.5 734" stroke="#2466b8" stroke-width="3.4" fill="none" stroke-linecap="round"/>
 <path d="M1300.5 724.3 Q1314 722 1320 727 Q1324 732 1316 738.5 Q1306 745.5 1292 747.5 Q1286 748.3 1284 748" stroke="url(#wg)" stroke-width="4.2" fill="none" stroke-linecap="round"/>
 <g fill="#bbb"><rect x="1433" y="746" width="1" height="1"/><rect x="1431" y="748" width="1" height="1"/><rect x="1433" y="748" width="1" height="1"/><rect x="1429" y="750" width="1" height="1"/><rect x="1431" y="750" width="1" height="1"/><rect x="1433" y="750" width="1" height="1"/><rect x="1427" y="752" width="1" height="1"/><rect x="1429" y="752" width="1" height="1"/><rect x="1431" y="752" width="1" height="1"/><rect x="1433" y="752" width="1" height="1"/></g>
</svg>
</body></html>
